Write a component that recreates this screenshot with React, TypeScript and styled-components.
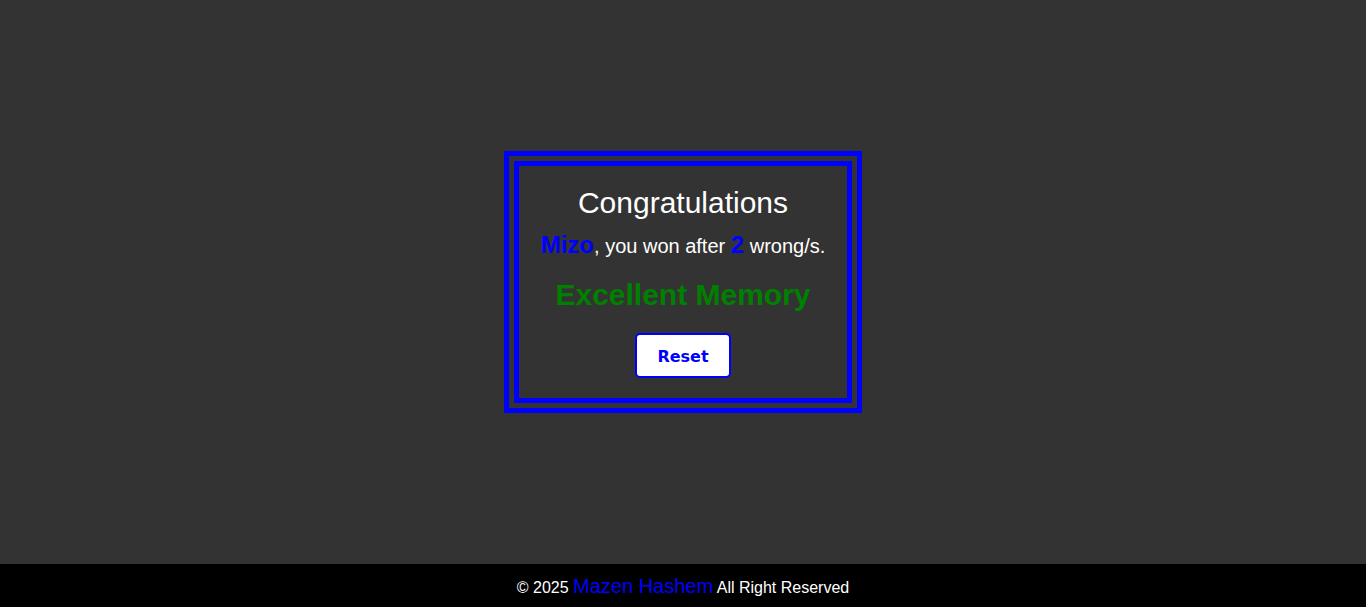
import React from "react";
import styled, { createGlobalStyle } from "styled-components";

const GlobalStyle = createGlobalStyle`
  html, body {
    margin: 0;
    padding: 0;
    background: #333333;
    font-family: "Liberation Sans", Arial, sans-serif;
    color: #ffffff;
  }
  * { box-sizing: border-box; }
`;

const Page = styled.div`
  min-height: 100vh;
  display: flex;
  flex-direction: column;
`;

const Main = styled.main`
  flex: 1;
  display: flex;
  align-items: center;
  justify-content: center;
`;

const Card = styled.section`
  border: 15px double #0000ff;
  padding: 20px 22px 20px;
  display: flex;
  flex-direction: column;
  align-items: center;
  text-align: center;
`;

const Title = styled.h2`
  margin: 0;
  font-size: 30px;
  font-weight: normal;
  line-height: normal;
`;

const Message = styled.p`
  margin: 11px 0 0;
  font-size: 20px;
  line-height: normal;
  white-space: nowrap;
`;

const Highlight = styled.span`
  color: #0000ff;
  font-weight: bold;
  font-size: 24px;
`;

const Verdict = styled.h3`
  margin: 19px 0 0;
  font-size: 30px;
  font-weight: bold;
  color: #008000;
  line-height: normal;
`;

const ResetButton = styled.button`
  margin-top: 21px;
  height: 45px;
  background: #ffffff;
  color: #0000ff;
  border: 2px solid #0000ff;
  border-radius: 5px;
  padding: 13px 20px 10px;
  font-family: "DejaVu Sans", Verdana, sans-serif;
  font-weight: bold;
  font-size: 16px;
  line-height: 18px;
  cursor: pointer;
`;

const Footer = styled.footer`
  background: #000000;
  color: #ffffff;
  text-align: center;
  font-size: 16px;
  padding: 11px 0 9px;
  height: 43px;
  line-height: 23px;
`;

const Author = styled.span`
  color: #0000ff;
  font-size: 20px;
`;

export default function App() {
  return (
    <>
      <GlobalStyle />
      <Page>
        <Main>
          <Card>
            <Title>Congratulations</Title>
            <Message>
              <Highlight>Mizo</Highlight>, you won after <Highlight>2</Highlight> wrong/s.
            </Message>
            <Verdict>Excellent Memory</Verdict>
            <ResetButton>Reset</ResetButton>
          </Card>
        </Main>
        <Footer>
          © 2025 <Author>Mazen Hashem</Author> All Right Reserved
        </Footer>
      </Page>
    </>
  );
}
